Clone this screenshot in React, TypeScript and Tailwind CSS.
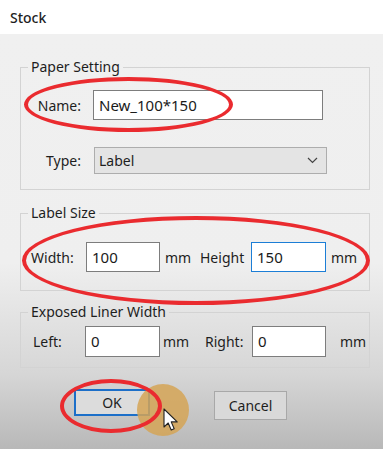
import React from "react";

function TextBox(props: { value: string; focused?: boolean; className?: string }) {
  const { value, focused, className } = props;
  return (
    <div
      className={
        "flex items-center bg-white px-[5px] text-[15px] text-[#1a1a1a] border " +
        (focused ? "border-[#1c7ed6] " : "border-[#7d7d7d] ") +
        (className ?? "")
      }
    >
      {value}
    </div>
  );
}

function Group(props: { title: string; className?: string; children: React.ReactNode }) {
  return (
    <fieldset
      className={
        "ml-[20px] mr-[13px] border border-[#d3d3d3] " + (props.className ?? "")
      }
    >
      <legend className="ml-[7px] px-[3px] text-[14px] leading-[18px] text-[#1e1e1e]">
        {props.title}
      </legend>
      {props.children}
    </fieldset>
  );
}

export default function App() {
  return (
    <div
      className="relative w-[383px] h-[449px] overflow-hidden text-[#1e1e1e]"
      style={{ fontFamily: '"Noto Sans", "DejaVu Sans", sans-serif' }}
    >
      <div className="h-[34px] bg-white flex items-center pl-[10px] text-[14px] font-medium">
        Stock
      </div>

      <div className="h-[415px] pt-[24px] bg-[linear-gradient(to_bottom,#f0f0f0_0%,#efefef_55%,#d6d6d6_82%,#b8b8b8_100%)]">
        <Group title="Paper Setting" className="pb-[15px]">
          <div className="mt-[14px] flex items-center">
            <span className="w-[60px] text-right text-[14px]">Name:</span>
            <TextBox value="New_100*150" className="ml-[12px] w-[230px] h-[30px]" />
          </div>
          <div className="mt-[27px] flex items-center">
            <span className="w-[60px] text-right text-[14px]">Type:</span>
            <div className="ml-[13px] w-[233px] h-[27px] flex items-center justify-between bg-[#e4e4e4] border border-[#adadad] pl-[4px] pr-[8px] text-[14px]">
              <span>Label</span>
              <svg width="11" height="7" viewBox="0 0 11 7" fill="none">
                <path d="M1 1l4.5 4.5L10 1" stroke="#444" strokeWidth="1.2" />
              </svg>
            </div>
          </div>
        </Group>

        <Group title="Label Size" className="mt-[14px] pb-[18px]">
          <div className="mt-[20px] flex items-center text-[14px]">
            <span className="ml-[10px] w-[55px]">Width:</span>
            <TextBox value="100" className="w-[74px] h-[30px]" />
            <span className="ml-[5px] w-[35px]">mm</span>
            <span className="w-[51px]">Height</span>
            <TextBox value="150" focused className="w-[75px] h-[30px]" />
            <span className="ml-[5px]">mm</span>
          </div>
        </Group>

        <Group title="Exposed Liner Width" className="mt-[12px] pb-[10px]">
          <div className="mt-[5px] flex items-center text-[14px]">
            <span className="ml-[12px] w-[52px]">Left:</span>
            <TextBox value="0" className="w-[75px] h-[31px]" />
            <span className="ml-[3px] w-[42px]">mm</span>
            <span className="w-[47px]">Right:</span>
            <TextBox value="0" className="w-[74px] h-[31px]" />
            <span className="ml-[14px]">mm</span>
          </div>
        </Group>

        <div className="mt-[21px] flex items-start text-[14px]">
          <button className="ml-[74px] w-[76px] h-[27px] bg-[#dcdcdc] border-2 border-[#1c6fc9] flex items-center justify-center">
            OK
          </button>
          <button className="ml-[64px] mt-[2px] w-[73px] h-[29px] bg-[#d9d9d9] border border-[#a8a8a8] flex items-center justify-center">
            Cancel
          </button>
        </div>
      </div>

      {/* annotation overlays */}
      <div className="absolute left-[137px] top-[384px] w-[52px] h-[52px] rounded-full bg-[#d5a456] opacity-85" />
      <div className="absolute left-[24px] top-[77px] w-[209px] h-[55px] rounded-[50%] border-[4px] border-[#ea2b2f]" />
      <div className="absolute left-[22px] top-[216px] w-[348px] h-[89px] rounded-[50%] border-[4px] border-[#ea2b2f]" />
      <div className="absolute left-[60px] top-[379px] w-[102px] h-[54px] rounded-[50%] border-[4px] border-[#ea2b2f]" />
      <svg className="absolute left-[163px] top-[408px]" width="16" height="25" viewBox="0 0 16 25">
        <path
          d="M1 1v18l4.2-4 3 7 3-1.3-3-6.8h6z"
          fill="#fff"
          stroke="#222"
          strokeWidth="1.1"
          strokeLinejoin="round"
        />
      </svg>
    </div>
  );
}
